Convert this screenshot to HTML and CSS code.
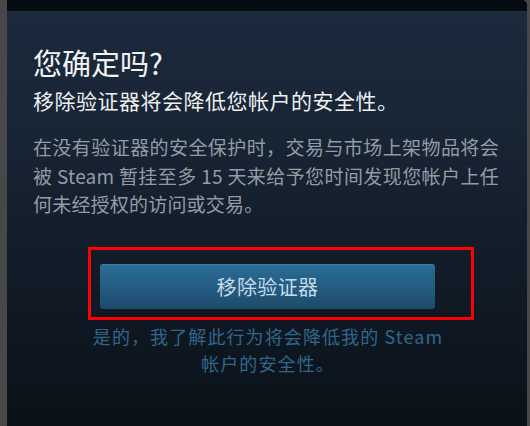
FILE: index.html
```html
<!DOCTYPE html>
<html lang="zh-CN">

<head>
    <meta charset="UTF-8">
    <meta name="viewport" content="width=device-width, initial-scale=1.0">
    <title>移除验证器</title>

    <link rel="stylesheet" href="styles.css">
</head>

<body>
    <!-- the grey page peeks out on both sides of the modal -->
    <div class="backdrop">
        <div class="modal">
            <div class="modal-top"></div>

            <div class="modal-body">
                <div class="modal-title">您确定吗?</div>
                <div class="modal-subtitle">移除验证器将会降低您帐户的安全性。</div>
                <p class="modal-text">在没有验证器的安全保护时，交易与市场上架物品将会被 Steam 暂挂至多 15 天来给予您时间发现您帐户上任何未经授权的访问或交易。</p>

                <div class="action">
                    <a class="btn-remove" href="#">移除验证器</a>
                    <!-- red frame drawn around the button -->
                    <div class="highlight"></div>
                </div>
                <div class="confirm-note">是的，我了解此行为将会降低我的 Steam 帐户的安全性。</div>
            </div>
        </div>
    </div>
</body>

</html>
```

FILE: styles.css
```css
body, html {
    margin: 0;
    height: 100%;
    overflow: hidden;
    font-family: "Noto Sans CJK SC", sans-serif;
}

body {
    background: #484848;
}

.backdrop {
    display: flex;
    height: 426px;
    padding-left: 7px;
    box-sizing: border-box;
}

/* the dialog itself */
.modal {
    width: 520px;
    height: 100%;
    border-radius: 0 5px 0 0;
    overflow: hidden;
    background: linear-gradient(to bottom, #1b2a3e 0%, #182535 30%, #121c28 62%, #0a1118 100%);
}

.modal-top {
    height: 11px;
    background: #040b12;
    border-bottom: 1px solid #243140;
}

.modal-body {
    padding: 32px 28px 0 26px;
}

.modal-title {
    font-size: 29px;
    line-height: 36px;
    color: #f2f4f6;
}

.modal-subtitle {
    margin-top: 6px;
    font-size: 21px;
    line-height: 28px;
    letter-spacing: .5px;
    color: #eef0f2;
}

.modal-text {
    margin: 19px 0 0;
    font-size: 19px;
    line-height: 28.5px;
    letter-spacing: .2px;
    text-align: justify;
    color: #939ca4;
}

/* button + confirmation line */
.action {
    position: relative;
    width: 335px;
    margin: 45px 0 0 67px;
}

.btn-remove {
    display: flex;
    justify-content: center;
    align-items: center;
    height: 45px;
    border-radius: 3px;
    box-sizing: border-box;
    border-top: 1px solid #3a7ca3;
    background: linear-gradient(to bottom, #2a6c95 0%, #235a80 55%, #1e4a6a 100%);
    font-size: 20px;
    letter-spacing: .4px;
    color: #c6dbea;
    text-decoration: none;
}

.highlight {
    position: absolute;
    left: -12px;
    top: -17px;
    width: 386px;
    height: 73px;
    border: 3px solid #ff0000;
    box-sizing: border-box;
    pointer-events: none;
}

.confirm-note {
    width: 360px;
    margin: 14px 0 0 55px;
    font-size: 18px;
    line-height: 27px;
    letter-spacing: 1.1px;
    text-align: center;
    color: #2f678c;
}
```
